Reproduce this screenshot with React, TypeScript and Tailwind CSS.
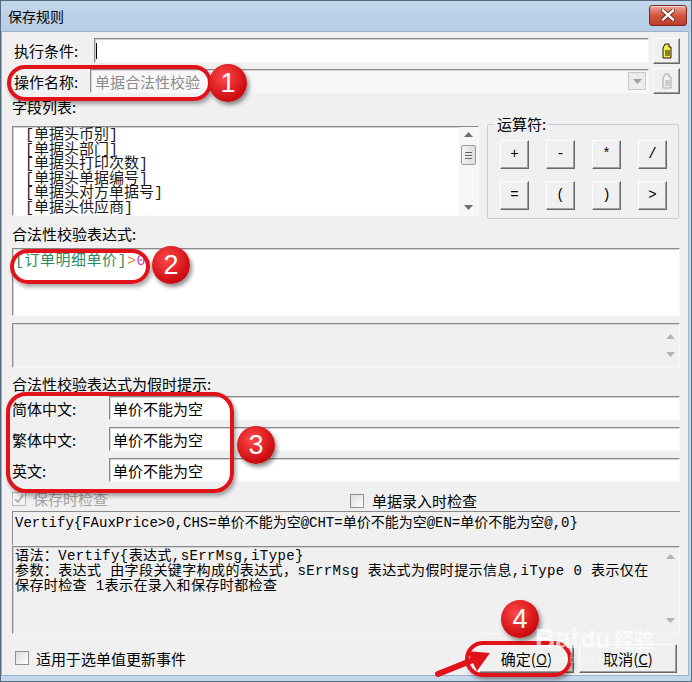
import React from 'react';

const cjk = "font-['Noto_Sans_CJK_SC','Liberation_Sans',sans-serif]";
const mono = "font-['Liberation_Mono','Noto_Sans_CJK_SC',monospace]";
const sunken = 'border border-t-[#8a8a8a] border-l-[#8a8a8a] border-b-[#f8f8f8] border-r-[#f8f8f8] shadow-[inset_1px_1px_0_#d4d4d4]';
const raised = 'border border-t-[#ffffff] border-l-[#ffffff] border-b-[#696969] border-r-[#696969] shadow-[inset_-1px_-1px_0_#a0a0a0] bg-[#f0f0f0]';

const fields = ['[单据头币别]', '[单据头部门]', '[单据头打印次数]', '[单据头单据编号]', '[单据头对方单据号]', '[单据头供应商]'];
const ops = ['+', '-', '*', '/', '=', '(', ')', '>'];
const hints = [
  { label: '简体中文:', value: '单价不能为空' },
  { label: '繁体中文:', value: '单价不能为空' },
  { label: '英文:', value: '单价不能为空' },
];

const Arrow = ({ up, color = '#8c8c8c' }: { up?: boolean; color?: string }) => (
  <svg width="9" height="5" viewBox="0 0 9 5">
    <path d={up ? 'M0 5 L4.5 0 L9 5 Z' : 'M0 0 L9 0 L4.5 5 Z'} fill={color} />
  </svg>
);

// little "note" glyph used on the two side buttons
const NoteIcon = ({ disabled }: { disabled?: boolean }) => (
  <svg width="12" height="16" viewBox="0 0 12 16">
    <path d="M4 1 L8 1 L8 4 L10 4 L10 15 L2 15 L2 5 Z" fill={disabled ? 'none' : '#f2ee3a'} stroke={disabled ? '#a8a8a8' : '#1a1a1a'} strokeWidth="1" />
    <path d="M4 8 H9 M4 10 H9 M4 12 H9" stroke={disabled ? '#a8a8a8' : '#1a1a1a'} strokeWidth="1" />
  </svg>
);

const Checkbox = ({ checked, disabled }: { checked?: boolean; disabled?: boolean }) => (
  <div className={`w-[14px] h-[14px] border ${disabled ? 'border-[#b8b8b8] bg-[#f4f4f4]' : 'border-[#8e8f8f] bg-gradient-to-br from-[#dcdcdc] to-[#ffffff]'} flex items-center justify-center`}>
    {checked && (
      <svg width="10" height="10" viewBox="0 0 10 10">
        <path d="M1 5 L4 8 L9 1" fill="none" stroke={disabled ? '#a6a6a6' : '#333'} strokeWidth="1.6" />
      </svg>
    )}
  </div>
);

const Badge = ({ n, className }: { n: string; className: string }) => (
  <div className={`absolute w-[38px] h-[38px] rounded-full bg-[radial-gradient(circle_at_40%_35%,#ff4a4a,#d00d12_65%,#a3060a)] shadow-[2px_3px_4px_rgba(0,0,0,0.45)] flex items-center justify-center text-white text-[27px] font-['Liberation_Sans',sans-serif] ${className}`}>
    {n}
  </div>
);

export default function App() {
  return (
    <div className={`relative w-[692px] h-[682px] bg-[#c4d7ec] border border-[#55697f] flex flex-col overflow-hidden ${cjk}`}>
      {/* title bar */}
      <div className="h-[30px] flex items-center justify-between bg-gradient-to-b from-[#c2d6ec] to-[#b7cde6] pl-[7px] pr-[4px]">
        <span className="text-[14px] text-black leading-none">保存规则</span>
        <div className="w-[38px] h-[21px] mt-[-2px] rounded-[3px] border border-[#7a2b21] bg-gradient-to-b from-[#e9a79a] via-[#d2553f] to-[#c0392a] flex items-center justify-center shadow-[inset_0_1px_0_rgba(255,255,255,0.6)]">
          <svg width="14" height="12" viewBox="0 0 14 12">
            <path d="M2 1.5 L12 10.5 M12 1.5 L2 10.5" stroke="#5a1a12" strokeWidth="4" strokeLinecap="square" />
            <path d="M2 1.5 L12 10.5 M12 1.5 L2 10.5" stroke="#ffffff" strokeWidth="2.4" strokeLinecap="square" />
          </svg>
        </div>
      </div>

      {/* client */}
      <div className="flex-1 mr-[2px] mb-[5px] bg-[#f0f0f0] border border-[#9fb1c6] pl-[10px] pr-[8px] flex flex-col text-[15px] text-black">
        <div className="mt-[6px] h-[25px] flex items-center">
          <div className="w-[82px] pl-[2px] leading-none">执行条件:</div>
          <div className={`flex-1 h-full bg-white ${sunken} flex items-center pl-[1px]`}>
            <div className="w-px h-[16px] bg-black" />
          </div>
          <div className={`ml-[4px] w-[27px] h-[26px] ${raised} flex items-center justify-center`}>
            <NoteIcon />
          </div>
        </div>

        <div className="mt-[6px] h-[24px] flex items-center">
          <div className="w-[78px] pl-[2px] leading-none">操作名称:</div>
          <div className={`flex-1 h-full bg-[#f7f7f7] ${sunken} flex items-center pl-[4px] pr-[2px]`}>
            <span className="flex-1 text-[#8d8d8d] leading-none">单据合法性校验</span>
            <div className="w-[18px] h-[18px] border border-[#c8c8c8] bg-[#ececec] flex items-center justify-center">
              <Arrow color="#a0a0a0" />
            </div>
          </div>
          <div className={`ml-[4px] w-[27px] h-[26px] ${raised} flex items-center justify-center`}>
            <NoteIcon disabled />
          </div>
        </div>

        <div className="mt-[4px] h-[18px] flex items-center leading-none">字段列表:</div>

        <div className="mt-[4px] flex items-start">
          <div className={`mt-[7px] w-[467px] h-[90px] bg-white ${sunken} flex overflow-hidden`}>
            <div className={`flex-1 pl-[12px] pt-[2px] ${mono} text-[15px] leading-[14.6px] text-[#1a1a1a]`}>
              {fields.map((f) => (
                <div key={f} className="h-[14.6px] whitespace-nowrap">{f}</div>
              ))}
            </div>
            <div className="w-[19px] bg-[#f6f6f6] flex flex-col items-center py-[5px]">
              <Arrow up color="#707070" />
              <div className="mt-[8px] w-[15px] h-[20px] rounded-[2px] border border-[#9a9a9a] bg-gradient-to-r from-[#f4f4f4] to-[#dcdcdc] flex flex-col items-center justify-center gap-[2px]">
                <div className="w-[7px] h-px bg-[#666]" />
                <div className="w-[7px] h-px bg-[#666]" />
                <div className="w-[7px] h-px bg-[#666]" />
              </div>
              <div className="flex-1" />
              <Arrow color="#707070" />
            </div>
          </div>

          <div className="ml-[8px] w-[192px] h-[100px] relative">
            <div className="mt-[5px] h-[95px] border border-[#c9cfd6] rounded-[2px] pl-[12px] pt-[15px]">
              <div className="grid grid-cols-[repeat(4,29px)] gap-x-[17px] gap-y-[12px]">
                {ops.map((o) => (
                  <div key={o} className={`w-[29px] h-[29px] ${raised} flex items-center justify-center text-[14px] ${mono}`}>
                    {o}
                  </div>
                ))}
              </div>
            </div>
            <span className="absolute left-[8px] top-[-4px] px-[2px] bg-[#f0f0f0] leading-[18px]">运算符:</span>
          </div>
        </div>

        <div className="mt-[5px] h-[18px] flex items-center leading-none">合法性校验表达式:</div>
        <div className={`mt-[6px] h-[68px] bg-white ${sunken} pl-[2px] pt-[5px] ${mono} text-[15px] leading-[16px] tracking-[0.5px]`}>
          <span className="text-[#2f8a63]">[订单明细单价]</span>
          <span className="text-[#d8892c]">&gt;</span>
          <span className="text-[#c43fc4]">0</span>
        </div>

        <div className={`mt-[7px] h-[45px] bg-[#f0f0f0] ${sunken} flex justify-end`}>
          <div className="w-[18px] flex flex-col items-center justify-between py-[10px]">
            <Arrow up color="#b4b4b4" />
            <Arrow color="#b4b4b4" />
          </div>
        </div>

        <div className="mt-[6px] h-[18px] flex items-center leading-none">合法性校验表达式为假时提示:</div>
        <div className="mt-[4px] flex flex-col gap-[7px]">
          {hints.map((h) => (
            <div key={h.label} className="h-[24px] flex items-center">
              <div className="w-[97px] leading-none">{h.label}</div>
              <div className={`flex-1 h-full bg-white ${sunken} flex items-center pl-[3px] leading-none`}>{h.value}</div>
            </div>
          ))}
        </div>

        <div className="mt-[6px] h-[20px] flex items-start">
          <div className="mt-[3px] flex items-center gap-[7px]">
            <Checkbox checked disabled />
            <span className="text-[#a3a3a3] leading-none">保存时检查</span>
          </div>
          <div className="ml-[242px] mt-[5px] flex items-center gap-[8px]">
            <Checkbox />
            <span className="leading-none">单据录入时检查</span>
          </div>
        </div>

        <div className={`mt-[3px] h-[34px] border-t border-l border-t-[#8a8a8a] border-l-[#8a8a8a] pl-[2px] pt-[3px] ${mono} text-[14px] leading-[16px] whitespace-nowrap`}>
          Vertify{'{'}FAuxPrice&gt;0,CHS=单价不能为空@CHT=单价不能为空@EN=单价不能为空@,0{'}'}
        </div>

        <div className={`mt-[1px] h-[88px] ${sunken} flex`}>
          <div className={`flex-1 pl-[2px] pt-[2px] ${mono} text-[14px] leading-[15px] tracking-[0.4px]`}>
            <div className="whitespace-nowrap">语法：Vertify{'{'}表达式,sErrMsg,iType{'}'}</div>
            <div className="whitespace-nowrap">参数：表达式 由字段关键字构成的表达式，sErrMsg 表达式为假时提示信息,iType 0 表示仅在</div>
            <div className="whitespace-nowrap">保存时检查 1表示在录入和保存时都检查</div>
          </div>
          <div className="w-[18px] flex flex-col items-center justify-between pt-[7px] pb-[10px]">
            <Arrow up color="#b4b4b4" />
            <Arrow color="#b4b4b4" />
          </div>
        </div>

        <div className="mt-[9px] h-[30px] flex items-center">
          <div className="ml-[3px] flex items-center gap-[7px]">
            <Checkbox />
            <span className="leading-none">适用于选单值更新事件</span>
          </div>
          <div className="flex-1" />
          <div className={`w-[95px] h-[29px] ${raised} flex items-center justify-center leading-none`}>
            确定(<span className="underline">O</span>)
          </div>
          <div className={`ml-[5px] mr-[3px] w-[98px] h-[29px] ${raised} flex items-center justify-center leading-none`}>
            取消(<span className="underline">C</span>)
          </div>
        </div>
      </div>

      {/* annotations */}
      <div className="absolute left-[6px] top-[64px] w-[205px] h-[36px] rounded-full border-[4px] border-[#e2121b] shadow-[2px_3px_4px_rgba(0,0,0,0.35)]" />
      <Badge n="1" className="left-[208px] top-[63px]" />
      <div className="absolute left-[9px] top-[248px] w-[140px] h-[35px] rounded-full border-[4px] border-[#e2121b] shadow-[2px_3px_4px_rgba(0,0,0,0.35)]" />
      <Badge n="2" className="left-[151px] top-[245px]" />
      <div className="absolute left-[5px] top-[391px] w-[228px] h-[101px] rounded-[20px] border-[4px] border-[#e2121b] shadow-[2px_3px_4px_rgba(0,0,0,0.35)]" />
      <Badge n="3" className="left-[236px] top-[425px]" />
      <div className="absolute left-[464px] top-[640px] w-[107px] h-[36px] rounded-full border-[4px] border-[#e2121b] shadow-[2px_3px_4px_rgba(0,0,0,0.35)]" />
      <Badge n="4" className="left-[500px] top-[599px]" />
      <svg className="absolute left-[434px] top-[642px]" width="60" height="36" viewBox="0 0 60 36">
        <path d="M3 31 L38 17" stroke="#e2121b" strokeWidth="6" strokeLinecap="round" />
        <path d="M55 10 L32 8 L42 28 Z" fill="#e2121b" />
      </svg>

      {/* watermark */}
      <div className="absolute left-[534px] top-[624px] flex flex-col items-start pointer-events-none">
        <div className="flex items-baseline text-white/70 font-['Liberation_Sans',sans-serif] font-bold text-[28px] leading-none">
          <span>Bai</span>
          <span className="ml-[2px] text-[24px]">du</span>
          <span className={`ml-[4px] text-[20px] ${cjk}`}>经验</span>
        </div>
        <div className="text-white/45 text-[10px] leading-none mt-[2px] font-['Liberation_Sans',sans-serif]">jingyan.baidu.com</div>
      </div>
    </div>
  );
}
